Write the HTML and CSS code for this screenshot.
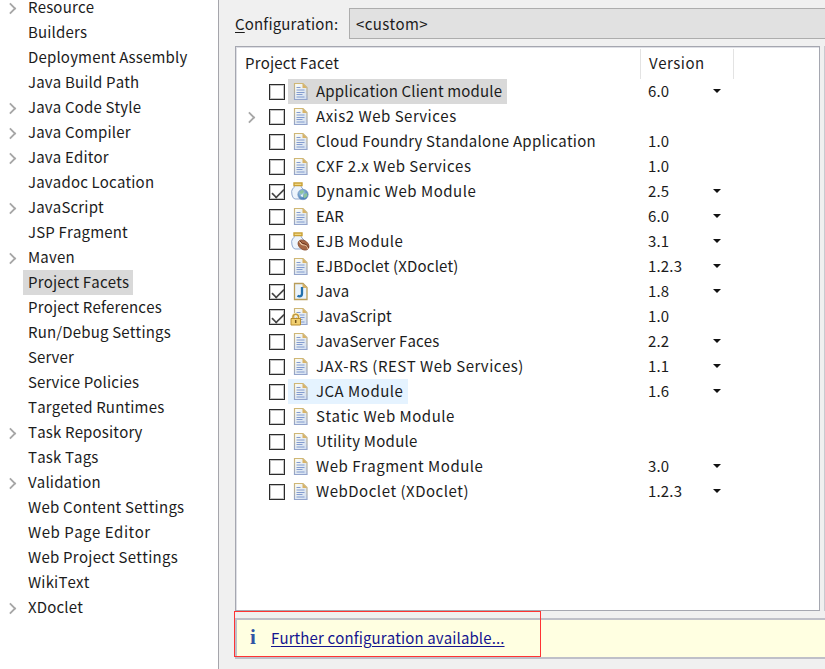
FILE: index.html
```html
<!DOCTYPE html>
<html lang="en">
<head>
<meta charset="utf-8">
<title>Project Facets</title>
<link rel="stylesheet" href="styles.css">
</head>
<body>
<svg class="defs" aria-hidden="true">
  <defs>
    <linearGradient id="paper" x1="0" y1="0" x2="1" y2="1"><stop offset="0" stop-color="#fffef4"/><stop offset="1" stop-color="#cfdcf0"/></linearGradient>
    <linearGradient id="edge" x1="0" y1="0" x2="0" y2="1"><stop offset="0" stop-color="#d0b774"/><stop offset="1" stop-color="#93a4cc"/></linearGradient>
    <radialGradient id="globe" cx=".4" cy=".35" r=".7"><stop offset="0" stop-color="#b8dce8"/><stop offset="1" stop-color="#3269ae"/></radialGradient>
    <symbol id="doc" viewBox="0 0 20 20">
      <path d="M4.500 2.500h8.500l4 4v12h-12.500z" fill="url(#paper)" stroke="url(#edge)" stroke-width="1.200"/>
      <path d="M12.500 2.500l4.500 4.500h-4.500z" fill="#d9b366"/>
      <path d="M6.500 6.500h4M6.500 9h8M6.500 11.500h8M6.500 13.500h6M6.500 16h8" stroke="#829bd0" stroke-width="1.100"/>
    </symbol>
    <symbol id="jar" viewBox="0 0 20 20">
      <path d="M4.500 4.500q0 2-2 3.500-1.500 1.500-.5 6 .7 3.500 3 4h6q4-1 4-6 0-3-3-5-1-1-1-2.500z" fill="#edf4fc" stroke="#91a9cf"/>
      <path d="M4 4.500V2h8v2.500z" fill="#fbe8a0" stroke="#c9a035" stroke-width="1.400"/>
    </symbol>
    <symbol id="web" viewBox="0 0 20 20">
      <use href="#jar"/>
      <circle cx="13" cy="13.500" r="5.200" fill="url(#globe)" stroke="#7c9bc5" stroke-width=".7"/>
      <path d="M10 10l3-1 1 2-2 2-2-.5zM14 13l3-1 .5 3-3 2.500-1-2z" fill="#8cc49d"/>
      <path d="M10.500 15l2-2 .5 3z" fill="#fff"/>
    </symbol>
    <symbol id="ejb" viewBox="0 0 20 20">
      <use href="#jar"/>
      <ellipse cx="13.500" cy="14" rx="6" ry="4.400" transform="rotate(38 13.500 14)" fill="#a76845" stroke="#82482c" stroke-width=".8"/>
      <path d="M9.500 10.500q2 4 5 3.500 3 0 3.500 4" fill="none" stroke="#f1d0ad" stroke-width="1.100"/>
      <path d="M10 10q2 3 5 3 3 1 3.500 4" fill="none" stroke="#6b351f"/>
    </symbol>
    <symbol id="java" viewBox="0 0 20 20">
      <path d="M4.500 2.500h8.500l4 4v12h-12.500z" fill="#eaf3fb" stroke="#b99d58" stroke-width="1.300"/>
      <path d="M12.500 2.500l4.500 4.500h-4.500z" fill="#d9b366"/>
      <path d="M12 6v6.500q0 2.800-2.500 2.800-1.200 0-2-.5" fill="none" stroke="#2270ad" stroke-width="2.300"/>
    </symbol>
    <symbol id="lock" viewBox="0 0 20 20">
      <use href="#doc"/>
      <path d="M3 13v-2.500a2.800 2.800 0 0 1 5.500 0V13" fill="none" stroke="#fff3c5" stroke-width="3"/>
      <path d="M3 13v-2.500a2.800 2.800 0 0 1 5.500 0V13" fill="none" stroke="#c39a3c" stroke-width="1.500"/>
      <path d="M1 12.500h9.500v6.500H1z" fill="#f1cf70" stroke="#b98d2c"/>
      <path d="M5.700 14v3" stroke="#75551a" stroke-width="1.500"/>
    </symbol>
  </defs>
</svg>
<div class="dialog">
  <nav class="nav">
    <div class="item more"><span>Resource</span></div>
    <div class="item"><span>Builders</span></div>
    <div class="item"><span>Deployment Assembly</span></div>
    <div class="item"><span>Java Build Path</span></div>
    <div class="item more"><span>Java Code Style</span></div>
    <div class="item more"><span>Java Compiler</span></div>
    <div class="item more"><span>Java Editor</span></div>
    <div class="item"><span>Javadoc Location</span></div>
    <div class="item more"><span>JavaScript</span></div>
    <div class="item"><span>JSP Fragment</span></div>
    <div class="item more"><span>Maven</span></div>
    <div class="item selected"><span>Project Facets</span></div>
    <div class="item"><span>Project References</span></div>
    <div class="item"><span>Run/Debug Settings</span></div>
    <div class="item"><span>Server</span></div>
    <div class="item"><span>Service Policies</span></div>
    <div class="item"><span>Targeted Runtimes</span></div>
    <div class="item more"><span>Task Repository</span></div>
    <div class="item"><span>Task Tags</span></div>
    <div class="item more"><span>Validation</span></div>
    <div class="item loose"><span>Web Content Settings</span></div>
    <div class="item wide"><span>Web Page Editor</span></div>
    <div class="item loose"><span>Web Project Settings</span></div>
    <div class="item"><span>WikiText</span></div>
    <div class="item more"><span>XDoclet</span></div>
  </nav>
  <main class="main">
    <div class="config"><label><u>C</u>onfiguration:</label><div class="combo">&lt;custom&gt;</div></div>
    <div class="panels">
      <section class="facets">
        <header class="head"><div class="h-name">Project Facet</div><div class="h-ver">Version</div></header>
        <div class="row selected"><i class="box"></i><div class="name"><svg><use href="#doc"/></svg><span>Application Client module</span></div><div class="ver drop">6.0</div></div>
        <div class="row more wide"><i class="box"></i><div class="name"><svg><use href="#doc"/></svg><span>Axis2 Web Services</span></div></div>
        <div class="row loose"><i class="box"></i><div class="name"><svg><use href="#doc"/></svg><span>Cloud Foundry Standalone Application</span></div><div class="ver">1.0</div></div>
        <div class="row wide"><i class="box"></i><div class="name"><svg><use href="#doc"/></svg><span>CXF 2.x Web Services</span></div><div class="ver">1.0</div></div>
        <div class="row wide"><i class="box checked"></i><div class="name"><svg><use href="#web"/></svg><span>Dynamic Web Module</span></div><div class="ver drop">2.5</div></div>
        <div class="row"><i class="box"></i><div class="name"><svg><use href="#doc"/></svg><span>EAR</span></div><div class="ver drop">6.0</div></div>
        <div class="row wide"><i class="box"></i><div class="name"><svg><use href="#ejb"/></svg><span>EJB Module</span></div><div class="ver drop">3.1</div></div>
        <div class="row"><i class="box"></i><div class="name"><svg><use href="#doc"/></svg><span>EJBDoclet (XDoclet)</span></div><div class="ver drop">1.2.3</div></div>
        <div class="row"><i class="box checked"></i><div class="name"><svg><use href="#java"/></svg><span>Java</span></div><div class="ver drop">1.8</div></div>
        <div class="row"><i class="box checked"></i><div class="name"><svg><use href="#lock"/></svg><span>JavaScript</span></div><div class="ver">1.0</div></div>
        <div class="row"><i class="box"></i><div class="name"><svg><use href="#doc"/></svg><span>JavaServer Faces</span></div><div class="ver drop">2.2</div></div>
        <div class="row wide"><i class="box"></i><div class="name"><svg><use href="#doc"/></svg><span>JAX-RS (REST Web Services)</span></div><div class="ver drop">1.1</div></div>
        <div class="row hover wide"><i class="box"></i><div class="name"><svg><use href="#doc"/></svg><span>JCA Module</span></div><div class="ver drop">1.6</div></div>
        <div class="row wide"><i class="box"></i><div class="name"><svg><use href="#doc"/></svg><span>Static Web Module</span></div></div>
        <div class="row loose"><i class="box"></i><div class="name"><svg><use href="#doc"/></svg><span>Utility Module</span></div></div>
        <div class="row wide"><i class="box"></i><div class="name"><svg><use href="#doc"/></svg><span>Web Fragment Module</span></div><div class="ver drop">3.0</div></div>
        <div class="row wide"><i class="box"></i><div class="name"><svg><use href="#doc"/></svg><span>WebDoclet (XDoclet)</span></div><div class="ver drop">1.2.3</div></div>
      </section>
      <aside class="next"></aside>
    </div>
    <div class="notice"><b>i</b><a>Further configuration available...</a><div class="mark"></div></div>
  </main>
</div>
</body>
</html>
```
FILE: styles.css
```css
* { box-sizing: border-box; }
body { margin: 0; font: 15px/23px "Noto Sans CJK SC", "Open Sans", sans-serif; font-kerning: none; letter-spacing: .17px; color: #1c1c1c; }
.defs { position: absolute; width: 0; height: 0; }
.dialog { display: flex; width: 825px; height: 669px; overflow: hidden; background: #f0f0f0; }
.nav { flex: none; width: 219px; background: #fff; border-right: 1px solid #a5a5ab; }
.item { display: flex; height: 25px; padding-left: 23px; white-space: nowrap; }
.item:first-child { height: 20px; line-height: 14px; }
.item.more:first-child::before { top: 4px; }
.item span { padding: 0 5px; }
.item.selected span { padding-right: 4px; background: #d9d9d9; }
.loose span { letter-spacing: .25px; }
.wide span { letter-spacing: .51px; }
.more { position: relative; }
.more::before { content: ""; position: absolute; left: 6px; top: 9px; width: 7px; height: 7px; border: solid #a6a6a6; border-width: 2px 2px 0 0; transform: rotate(45deg) scale(.9); }
.main { flex: 1; min-width: 0; padding-left: 16px; }
.config { display: flex; padding-top: 8px; height: 46px; }
.config label { width: 114px; line-height: 31px; }
.config u { text-underline-offset: 2px; }
.combo { flex: 1; height: 31px; border: 1px solid #adadad; border-right: 0; background: #e1e1e1; padding-left: 6px; line-height: 29px; letter-spacing: .35px; }
.panels { display: flex; gap: 4px; height: 565px; }
.facets { width: 585px; height: 565px; background: #fff; border: 1px solid #a5a7b0; box-shadow: inset 1px 1px #dedfe5; }
.next { flex: 1; border-left: 1px solid #c9cad0; }
.head { display: flex; height: 32px; padding-top: 2px; line-height: 28px; }
.h-name { width: 405px; padding-left: 9px; border-right: 1px solid #e3e3e3; }
.h-ver { width: 93px; padding-left: 8px; border-right: 1px solid #e3e3e3; letter-spacing: .5px; }
.row { display: flex; height: 25px; padding-left: 33px; white-space: nowrap; }
.row.more::before { left: 9px; top: 9px; }
.box { flex: none; width: 16px; height: 16px; margin: 5px 3px 0 0; border: 1px solid #2b2b2b; box-shadow: inset 0 0 0 1px #c4c4c4; background: #fff; }
.checked::after { content: ""; display: block; width: 12px; height: 6px; margin: 3px 0 0 1px; border: solid #444; border-width: 0 0 2px 2px; transform: rotate(-45deg) scale(.85); }
.name { display: flex; width: 358px; }
.name svg { flex: none; width: 20px; height: 20px; margin: 2px 0 0 2px; }
.name span { padding: 0 5px 0 6px; }
.selected .name { width: auto; background: #d9d9d9; }
.hover .name { width: auto; background: #e5f3ff; }
.ver { position: relative; width: 80px; margin-left: auto; margin-right: 91px; }
.drop::after { content: ""; position: absolute; left: 65px; top: 10px; border: 4px solid transparent; border-top-color: #111; border-bottom: 0; }
.notice { position: relative; display: flex; margin-top: 7px; height: 41px; background: #ffffe1; border: solid #bfc0c8; border-width: 2px 0 2px 2px; line-height: 36px; }
.notice b { width: 34px; padding-left: 13px; font: bold 21px/35px "Liberation Serif", serif; color: #3155a5; }
.notice a { color: #14148f; letter-spacing: .12px; text-decoration: underline; text-underline-offset: 2px; }
.mark { position: absolute; left: -3px; top: -9px; width: 307px; height: 46px; border: 1px solid #f33; }
```
